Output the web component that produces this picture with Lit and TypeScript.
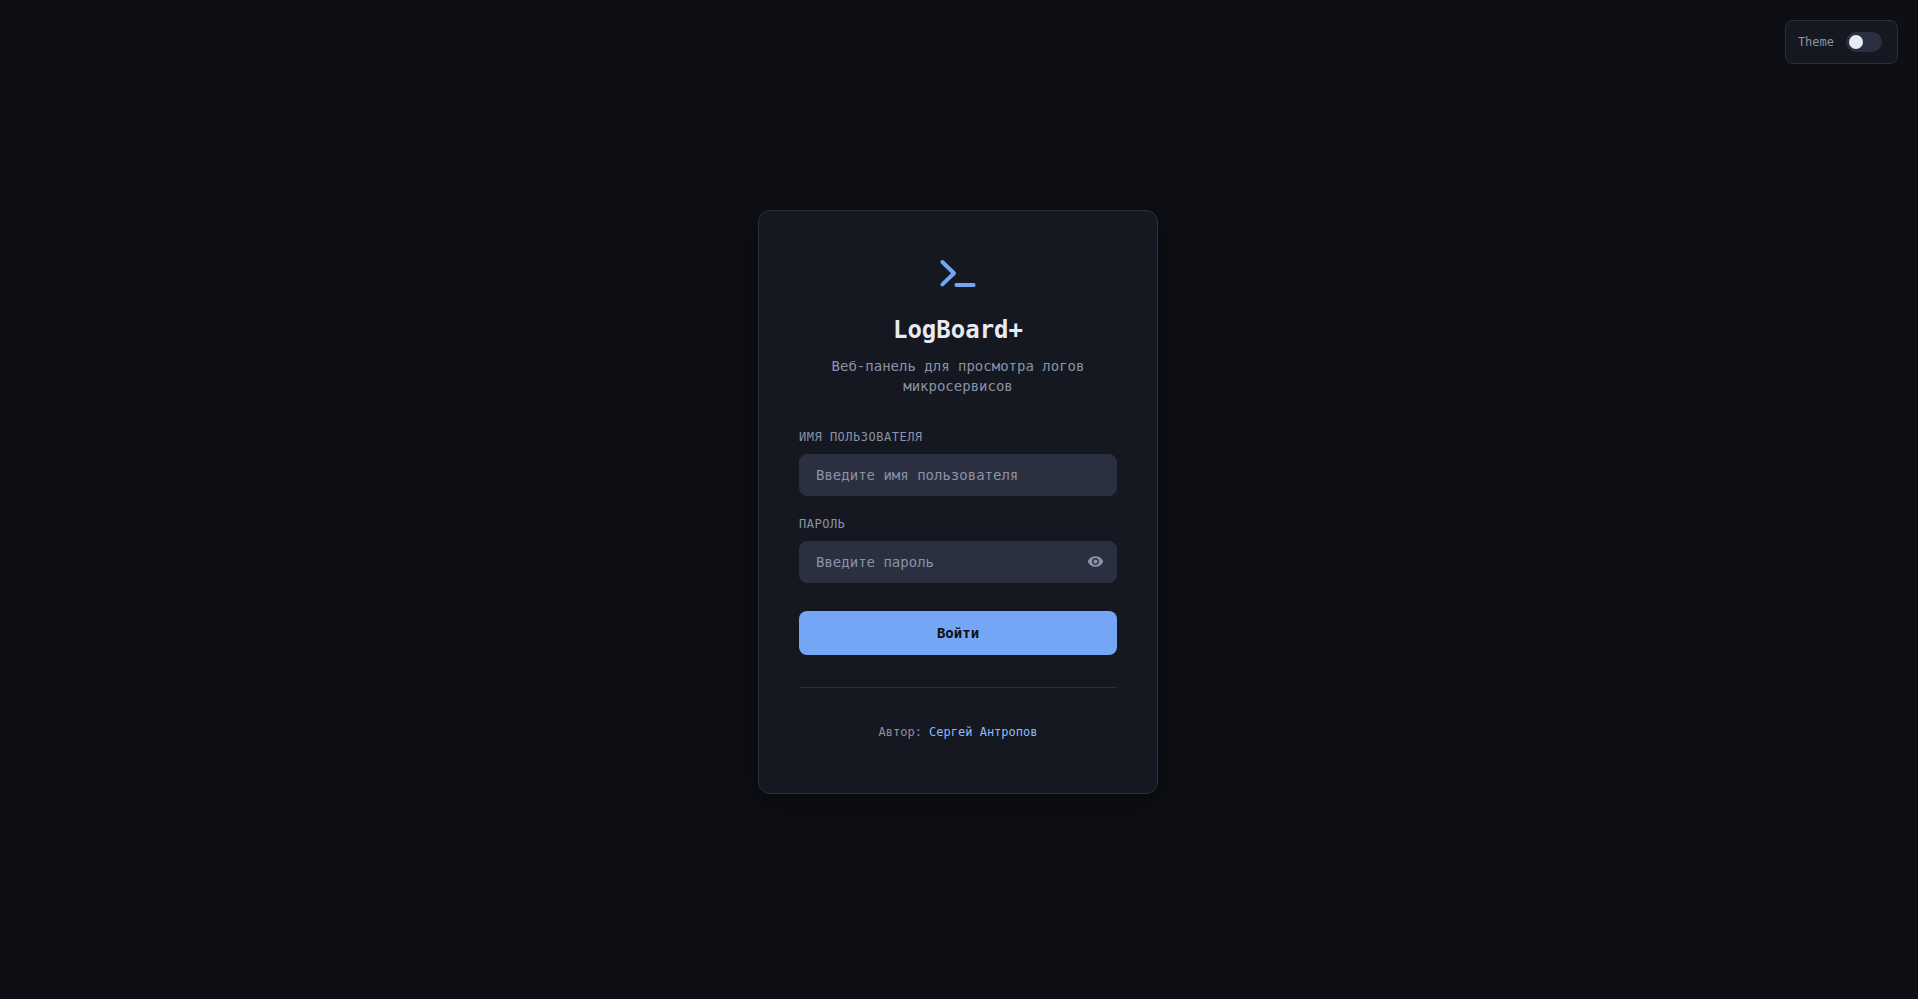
import { LitElement, html, css } from 'lit';
import { customElement, state } from 'lit/decorators.js';

@customElement('app-root')
export class AppRoot extends LitElement {
  @state() private showPassword = false;

  static styles = css`
    :host {
      display: block;
      --bg: #0d0f14;
      --card: #151821;
      --field: #2b3040;
      --line: #2b3040;
      --accent: #75a5f5;
      --text: #e8ebf4;
      --muted: #8a92a6;
      --mono: 'DejaVu Sans Mono', monospace;
      font-family: var(--mono);
    }

    * {
      box-sizing: border-box;
    }

    .page {
      min-height: 100vh;
      display: flex;
      align-items: center;
      justify-content: center;
      padding: 5px 2px 0 0;
      background: var(--bg);
    }

    .theme {
      position: fixed;
      top: 20px;
      right: 20px;
      display: flex;
      align-items: center;
      gap: 12px;
      padding: 11px 15px 11px 12px;
      background: var(--card);
      border: 1px solid var(--line);
      border-radius: 8px;
      color: var(--muted);
      font-size: 12px;
    }

    .toggle {
      width: 36px;
      height: 20px;
      padding: 3px;
      border-radius: 10px;
      background: var(--field);
    }

    .knob {
      display: block;
      width: 14px;
      height: 14px;
      border-radius: 50%;
      background: var(--text);
    }

    .card {
      width: 400px;
      padding: 40px;
      background: var(--card);
      border: 1px solid var(--line);
      border-radius: 12px;
      box-shadow: 0 8px 32px rgba(0, 0, 0, 0.4);
    }

    .head {
      display: flex;
      flex-direction: column;
      align-items: center;
      text-align: center;
      margin-bottom: 33px;
    }

    .logo {
      width: 48px;
      height: 48px;
      margin-bottom: 16px;
      color: var(--accent);
    }

    h1 {
      margin: 1px 0 12px;
      font-size: 24px;
      line-height: 28px;
      font-weight: 700;
      color: var(--text);
    }

    .sub {
      margin: 0;
      font-size: 14px;
      line-height: 20px;
      color: var(--muted);
    }

    .group {
      margin-bottom: 20px;
    }

    label {
      display: block;
      margin-bottom: 9px;
      font-size: 12px;
      line-height: 16px;
      letter-spacing: 0.5px;
      text-transform: uppercase;
      color: var(--muted);
    }

    .field {
      position: relative;
    }

    input {
      display: block;
      width: 100%;
      height: 42px;
      padding: 0 16px;
      border: 1px solid var(--field);
      border-radius: 8px;
      outline: none;
      background: var(--field);
      color: var(--text);
      font: 14px var(--mono);
    }

    input::placeholder {
      color: var(--muted);
      opacity: 1;
    }

    .eye {
      position: absolute;
      top: 12px;
      right: 13.5px;
      width: 17px;
      height: 17px;
      padding: 0;
      border: 0;
      background: none;
      color: var(--muted);
      cursor: pointer;
    }

    .eye svg {
      display: block;
      width: 17px;
      height: 17px;
    }

    .submit {
      display: block;
      width: 100%;
      height: 44px;
      margin-top: 28px;
      border: 0;
      border-radius: 8px;
      background: var(--accent);
      color: #0d0f14;
      font: 700 14px var(--mono);
      cursor: pointer;
    }

    .footer {
      margin-top: 32px;
      padding: 36px 0 13px;
      border-top: 1px solid var(--line);
      text-align: center;
      font-size: 12px;
      line-height: 16px;
      color: var(--muted);
    }

    a {
      color: #93b9fa;
      text-decoration: none;
    }
  `;

  render() {
    return html`
      <div class="page">
        <div class="theme">
          <span>Theme</span>
          <span class="toggle"><span class="knob"></span></span>
        </div>
        <main class="card">
          <div class="head">
            <svg class="logo" viewBox="0 0 24 24" fill="none" stroke="currentColor" stroke-width="2" stroke-linecap="round" stroke-linejoin="round">
              <polyline points="4.2 5.5 10 11.1 4.2 16.7"></polyline>
              <line x1="11.2" y1="17" x2="19.8" y2="17"></line>
            </svg>
            <h1>LogBoard+</h1>
            <p class="sub">Веб-панель для просмотра логов микросервисов</p>
          </div>
          <form @submit=${(e: Event) => e.preventDefault()}>
            <div class="group">
              <label for="user">Имя пользователя</label>
              <input id="user" type="text" placeholder="Введите имя пользователя" />
            </div>
            <div class="group">
              <label for="pass">Пароль</label>
              <div class="field">
                <input id="pass" type=${this.showPassword ? 'text' : 'password'} placeholder="Введите пароль" />
                <button class="eye" type="button" aria-label="Показать пароль" @click=${() => (this.showPassword = !this.showPassword)}>
                  <svg viewBox="0 0 24 24" fill="currentColor">
                    <path d="M12 4.5C7 4.5 2.73 7.61 1 12c1.73 4.39 6 7.5 11 7.5s9.27-3.11 11-7.5c-1.73-4.39-6-7.5-11-7.5zM12 17c-2.76 0-5-2.24-5-5s2.24-5 5-5 5 2.24 5 5-2.24 5-5 5zm0-8c-1.66 0-3 1.34-3 3s1.34 3 3 3 3-1.34 3-3-1.34-3-3-3z"></path>
                  </svg>
                </button>
              </div>
            </div>
            <button class="submit" type="submit">Войти</button>
          </form>
          <footer class="footer">Автор: <a href="#">Сергей Антропов</a></footer>
        </main>
      </div>
    `;
  }
}
